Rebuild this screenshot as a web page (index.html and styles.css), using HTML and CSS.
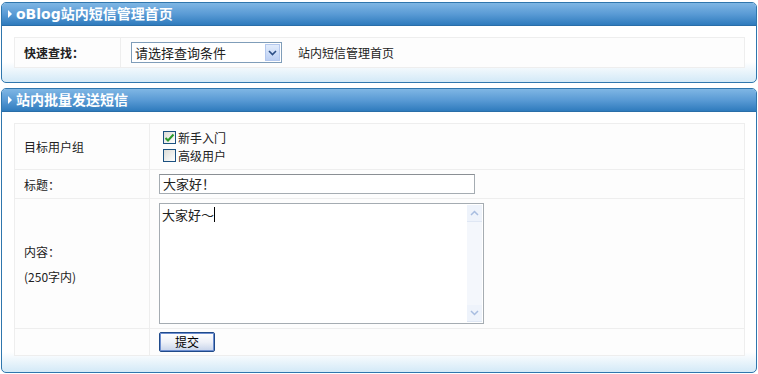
FILE: index.html
```html
<!DOCTYPE html>
<html lang="zh-CN">
<head>
    <meta charset="UTF-8">
    <title>oBlog站内短信管理首页</title>
    <link rel="stylesheet" href="styles.css">
</head>
<body>
    <div class="panel panel-top">
        <div class="panel-head"><span class="arrow"></span>oBlog站内短信管理首页</div>
        <div class="panel-body">
            <table class="form-table search-table">
                <tr>
                    <td class="label-cell bold">快速查找：</td>
                    <td class="field-cell">
                        <div class="select-box">
                            <span class="select-text">请选择查询条件</span>
                            <span class="select-btn">
                                <svg width="9" height="6" viewBox="0 0 9 6"><path d="M1 1 L4.5 4.5 L8 1" fill="none" stroke="#2c4f86" stroke-width="1.6"/></svg>
                            </span>
                        </div>
                        <span class="home-link">站内短信管理首页</span>
                    </td>
                </tr>
            </table>
        </div>
    </div>

    <div class="panel panel-send">
        <div class="panel-head"><span class="arrow"></span>站内批量发送短信</div>
        <div class="panel-body">
            <table class="form-table send-table">
                <tr class="row-group">
                    <td class="label-cell">目标用户组</td>
                    <td class="field-cell">
                        <label class="check"><span class="box checked"><svg width="11" height="10" viewBox="0 0 11 10"><path d="M1.5 5 L4 7.5 L9.5 1.5" fill="none" stroke="#2a9a2a" stroke-width="2"/></svg></span>新手入门</label>
                        <label class="check"><span class="box"></span>高级用户</label>
                    </td>
                </tr>
                <tr class="row-title">
                    <td class="label-cell">标题：</td>
                    <td class="field-cell"><div class="text-input">大家好！</div></td>
                </tr>
                <tr class="row-content">
                    <td class="label-cell">内容：<br><span class="limit">(250字内)</span></td>
                    <td class="field-cell">
                        <div class="textarea">
                            <div class="textarea-text">大家好～<span class="caret"></span></div>
                            <div class="scrollbar">
                                <span class="scroll-btn"><svg width="9" height="6" viewBox="0 0 9 6"><path d="M1 5 L4.5 1.5 L8 5" fill="none" stroke="#a8bde0" stroke-width="1.5"/></svg></span>
                                <span class="scroll-btn"><svg width="9" height="6" viewBox="0 0 9 6"><path d="M1 1 L4.5 4.5 L8 1" fill="none" stroke="#a8bde0" stroke-width="1.5"/></svg></span>
                            </div>
                        </div>
                    </td>
                </tr>
                <tr class="row-submit">
                    <td class="label-cell"></td>
                    <td class="field-cell"><button class="submit-btn">提交</button></td>
                </tr>
            </table>
        </div>
    </div>
</body>
</html>
```

FILE: styles.css
```css
body {
    margin: 0;
    padding: 2px 1px 0 1px;
    background: #ffffff;
    font-family: "Noto Sans CJK SC", "DejaVu Sans", sans-serif;
    font-size: 12px;
    color: #222;
}

.panel {
    border: 1px solid #2f76ad;
    border-radius: 5px;
    overflow: hidden;
    background: linear-gradient(to top, #d3e9f7 0px, #ffffff 20px);
}

.panel-send {
    margin-top: 5px;
}

.panel-head {
    height: 22px;
    line-height: 22px;
    background: linear-gradient(to bottom, #7fb6e4 0%, #5a9bd5 50%, #2f7bbd 100%);
    border-bottom: 1px solid #2a6ea8;
    color: #ffffff;
    font-family: "DejaVu Sans", "Noto Sans CJK SC", sans-serif;
    font-weight: bold;
    font-size: 14px;
    padding-left: 6px;
    display: flex;
    align-items: center;
}

.arrow {
    width: 0;
    height: 0;
    border-top: 4px solid transparent;
    border-bottom: 4px solid transparent;
    border-left: 4px solid #ffffff;
    margin-right: 4px;
}

.panel-body {
    padding: 11px 11px 14px 12px;
}

.panel-send .panel-body {
    padding-top: 11px;
    padding-bottom: 16px;
}

.form-table {
    width: 100%;
    border-collapse: collapse;
    background: #fdfdfd;
    border: 1px solid #eeeeee;
}

.form-table td {
    border: 1px solid #eeeeee;
    vertical-align: middle;
}

.label-cell {
    padding-left: 9px;
    text-align: left;
}

.bold {
    font-weight: bold;
}

.search-table td {
    height: 27px;
}

.search-table .label-cell {
    width: 95px;
}

.field-cell {
    padding-left: 9px;
}

.search-table .field-cell {
    display: flex;
    align-items: center;
    height: 27px;
    padding-left: 10px;
    border: none;
}

.select-box {
    width: 149px;
    height: 19px;
    border: 1px solid #7f9db9;
    background: #ffffff;
    display: flex;
    align-items: center;
    justify-content: space-between;
    font-size: 13px;
}

.select-text {
    padding-left: 3px;
}

.select-btn {
    width: 15px;
    height: 17px;
    margin-right: 1px;
    background: linear-gradient(to bottom, #e2ecfc, #bcd0f4);
    border: 1px solid #b4c8ee;
    box-sizing: border-box;
    display: flex;
    align-items: center;
    justify-content: center;
}

.home-link {
    margin-left: 16px;
}

.send-table .label-cell {
    width: 124px;
}

.row-group td {
    height: 43px;
}

.check {
    display: flex;
    align-items: center;
    height: 18px;
    font-size: 12px;
}

.box {
    width: 11px;
    height: 11px;
    border: 1px solid #1c5180;
    background: linear-gradient(135deg, #dcdcd6, #ffffff);
    margin: 0 2px 0 4px;
    display: flex;
    align-items: center;
    justify-content: center;
}

.row-title td {
    height: 26px;
}

.text-input {
    width: 311px;
    height: 18px;
    line-height: 18px;
    border: 1px solid #a5acb2;
    border-top-color: #8a8f94;
    padding-left: 3px;
    font-size: 13px;
    background: #ffffff;
}

.row-content td {
    height: 127px;
}

.row-content .label-cell {
    line-height: 25px;
}

.limit {
    font-size: 12px;
}

.textarea {
    width: 323px;
    height: 119px;
    border: 1px solid #a5acb2;
    display: flex;
    background: #ffffff;
}

.textarea-text {
    flex: 1;
    padding: 1px 2px;
    font-size: 13px;
    display: flex;
    align-items: flex-start;
    height: 18px;
}

.caret {
    display: inline-block;
    width: 1px;
    height: 15px;
    background: #000;
    margin-top: 2px;
}

.scrollbar {
    width: 15px;
    margin: 1px;
    background: #f4f7fc;
    display: flex;
    flex-direction: column;
    justify-content: space-between;
}

.scroll-btn {
    height: 16px;
    display: flex;
    align-items: center;
    justify-content: center;
    background: #eef3fb;
    border-bottom: 1px solid #dfe7f4;
}

.row-submit td {
    height: 24px;
}

.submit-btn {
    width: 56px;
    height: 20px;
    border: 1px solid #1f4a8a;
    border-radius: 2px;
    background: linear-gradient(to bottom, #ffffff 0%, #eef1f8 50%, #c6d3ea 100%);
    box-shadow: inset 0 0 0 1px #6d8ed0;
    font-family: "Noto Sans CJK SC", sans-serif;
    font-size: 12px;
    color: #000;
    padding: 0;
    line-height: 16px;
}
```
